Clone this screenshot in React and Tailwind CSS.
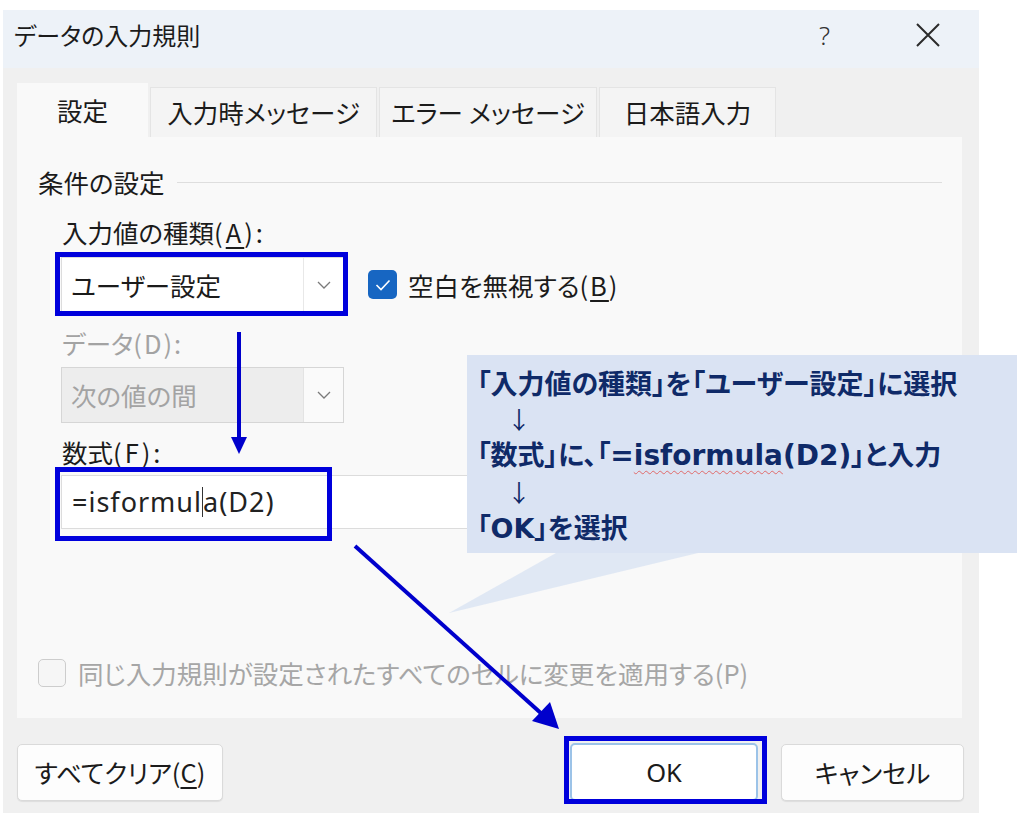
import React from "react";

const jp = "font-['Noto_Sans_CJK_JP',sans-serif] [font-feature-settings:'palt']";

function Chevron() {
  return (
    <svg width="14" height="8" viewBox="0 0 14 8">
      <path d="M1 1l6 6 6-6" fill="none" stroke="#7a7a7a" strokeWidth="1.3" />
    </svg>
  );
}

function App() {
  return (
    <div className={`w-[1024px] h-[826px] bg-white relative overflow-hidden pt-[10px] pl-[3px] text-[#1b1b1b] ${jp}`}>
      {/* dialog */}
      <div className="w-[976px] h-[803px] bg-[#f0f0f0] flex flex-col">
        {/* title bar */}
        <div className="h-[58px] shrink-0 bg-[#edf2f8] flex items-center pb-[9px] pl-[11px] pr-[39px]">
          <span className="text-[24px] leading-[32px]">データの入力規則</span>
          <span className="ml-auto text-[26px] leading-[32px] font-['Noto_Sans',sans-serif] font-light text-[#333]">?</span>
          <svg className="ml-[86px]" width="24" height="24" viewBox="0 0 24 24">
            <path d="M1 1L23 23M23 1L1 23" stroke="#2b2b2b" strokeWidth="2" />
          </svg>
        </div>

        {/* tabs */}
        <div className="mt-[15px] pl-[14px] flex items-end gap-[2px] h-[54px]">
          <div className="w-[131px] h-[54px] bg-[#f9f9f9] flex items-center justify-center text-[25.5px]">設定</div>
          <div className="w-[227px] h-[50px] bg-[#f4f4f4] border border-b-0 border-[#e4e4e4] flex items-center justify-center text-[25.5px]">入力時メッセージ</div>
          <div className="w-[218px] h-[50px] bg-[#f4f4f4] border border-b-0 border-[#e4e4e4] flex items-center justify-center text-[25.5px]">エラー メッセージ</div>
          <div className="w-[177px] h-[50px] bg-[#f4f4f4] border border-b-0 border-[#e4e4e4] flex items-center justify-center text-[25.5px]">日本語入力</div>
        </div>

        {/* panel */}
        <div className="ml-[14px] w-[945px] h-[581px] shrink-0 bg-[#f9f9f9] pl-[21px] pr-[20px] pt-[29px] text-[25.5px] leading-[32px]">
          <div className="flex items-center">
            <span>条件の設定</span>
            <div className="flex-1 h-px bg-[#dedede] ml-[12px]" />
          </div>

          <div className="pl-[23px]">
            <div className="mt-[18px] pl-[1px]">
              入力値の種類<span className="tracking-[3px]">(<span className="underline underline-offset-4">A</span>):</span>
            </div>
            <div className="mt-[9px] flex items-center">
              <div className="w-[283px] h-[55px] bg-white border border-[#dcdcdc] flex items-center">
                <span className="flex-1 pl-[9px]">ユーザー設定</span>
                <div className="w-[40px] h-full border-l border-[#e8e8e8] flex items-center justify-center">
                  <Chevron />
                </div>
              </div>
              <div className="ml-[24px] w-[29px] h-[29px] rounded-[5px] bg-[#1766c2] flex items-center justify-center">
                <svg width="16" height="12" viewBox="0 0 16 12">
                  <path d="M1.5 6l4.5 4.5 8.5-9" fill="none" stroke="white" strokeWidth="1.6" />
                </svg>
              </div>
              <span className="ml-[11px]">
                空白を無視する<span className="tracking-[2px]">(<span className="underline underline-offset-4">B</span>)</span>
              </span>
            </div>

            <div className="mt-[15px] pl-[1px] text-[#a3a3a3]">
              データ<span className="tracking-[2px]">(D):</span>
            </div>
            <div className="mt-[8px] w-[283px] h-[56px] bg-[#ededed] border border-[#d6d6d6] flex items-center">
              <span className="flex-1 pl-[9px] text-[#a3a3a3]">次の値の間</span>
              <div className="w-[40px] h-full bg-[#fafafa] border-l border-[#e3e3e3] flex items-center justify-center">
                <Chevron />
              </div>
            </div>

            <div className="mt-[13px] pl-[1px]">
              数式<span className="tracking-[3px]">(<span className="underline underline-offset-4">F</span>):</span>
            </div>
            <div className="mt-[7px] h-[54px] bg-white border border-[#dcdcdc] flex items-center pl-[10px] font-['Noto_Sans','Noto_Sans_CJK_JP',sans-serif] text-[27px] tracking-[1px] text-[#222]">
              <span>=isformul</span>
              <span className="inline-block w-px h-[30px] bg-[#333]" />
              <span>a(D2)</span>
            </div>
          </div>

          <div className="mt-[128px] flex items-center text-[#a6a6a6]">
            <div className="w-[28px] h-[28px] rounded-[5px] border border-[#cdcdcd] bg-[#f6f6f6]" />
            <span className="ml-[12px]">同じ入力規則が設定されたすべてのセルに変更を適用する(P)</span>
          </div>
        </div>

        {/* buttons */}
        <div className="mt-[25px] pl-[14px] pr-[15px] flex items-center text-[25.5px]">
          <div className="w-[206px] h-[57px] bg-[#fdfdfd] border border-[#dadada] rounded-[5px] shadow-[0_1px_1px_rgba(0,0,0,0.08)] flex items-center justify-center">
            すべてクリア(<span className="underline underline-offset-4">C</span>)
          </div>
          <div className="ml-auto w-[188px] h-[58px] bg-white border-2 border-[#9cc3e8] rounded-[5px] flex items-center justify-center font-['Noto_Sans',sans-serif]">
            OK
          </div>
          <div className="ml-[23px] w-[183px] h-[57px] bg-[#fdfdfd] border border-[#dadada] rounded-[5px] shadow-[0_1px_1px_rgba(0,0,0,0.08)] flex items-center justify-center">
            キャンセル
          </div>
        </div>
      </div>

      {/* annotation: highlight boxes */}
      <div className="absolute left-[55px] top-[252px] w-[293px] h-[64px] border-[5px] border-[#0000dc]" />
      <div className="absolute left-[55px] top-[467px] w-[277px] h-[74px] border-[5px] border-[#0000dc]" />
      <div className="absolute left-[564px] top-[736px] w-[203px] h-[68px] border-[5px] border-[#0000dc]" />

      {/* annotation: callout */}
      <div className="absolute left-[467px] top-[355px] w-[550px] h-[198px] bg-[#dae3f3] pl-[10px] pt-[10px] text-[27px] leading-[35.5px] font-bold text-[#0f2a68]">
        <div>「入力値の種類」を「ユーザー設定」に選択</div>
        <div className="pl-[30px] font-normal text-[24px]">↓</div>
        <div>
          「数式」に、「
          <span className="font-['DejaVu_Sans',sans-serif] text-[28px]">
            =<span className="underline decoration-wavy decoration-[#e06a6a] decoration-1 underline-offset-[5px]">isformula</span>(D2)
          </span>
          」と入力
        </div>
        <div className="pl-[30px] font-normal text-[24px]">↓</div>
        <div>
          「<span className="font-['DejaVu_Sans',sans-serif] text-[27px]">OK</span>」を選択
        </div>
      </div>

      {/* annotation: arrows + callout tail */}
      <svg className="absolute left-0 top-0 pointer-events-none" width="1024" height="826" viewBox="0 0 1024 826">
        <polygon points="556,553 698,553 449,613" fill="#dae3f3" fillOpacity="0.8" />
        <line x1="239" y1="332" x2="239" y2="440" stroke="#0000cc" strokeWidth="4" />
        <polygon points="231,437 247,437 239,454" fill="#0000cc" />
        <line x1="355" y1="546" x2="543" y2="715" stroke="#0000cc" strokeWidth="4" />
        <polygon points="532,721 550,702 559,729" fill="#0000cc" />
      </svg>
    </div>
  );
}

export default App;
